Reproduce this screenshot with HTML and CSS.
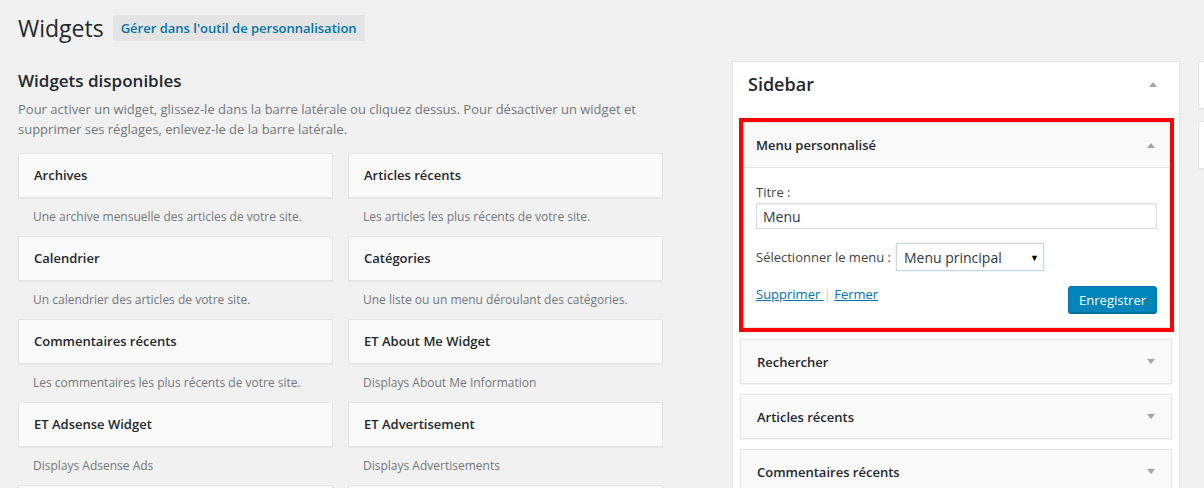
FILE: index.html
```html
<!DOCTYPE html>
<html lang="fr">
  <head>
    <meta charset="UTF-8" />
    <meta name="viewport" content="width=device-width, initial-scale=1.0" />
    <title>Widgets</title>
    <link rel="stylesheet" href="styles.css">
  </head>
  <body>
    <div class="wrap">
      <div class="page-title">
        <h1>Widgets</h1>
        <a class="title-action" href="#">Gérer dans l'outil de personnalisation</a>
      </div>

      <div class="columns">
        <div class="available">
          <h2>Widgets disponibles</h2>
          <p class="intro">
            Pour activer un widget, glissez-le dans la barre latérale ou cliquez dessus. Pour désactiver un widget et
            supprimer ses réglages, enlevez-le de la barre latérale.
          </p>

          <div class="widget-list">
            <div class="widget-item">
              <div class="widget-title">Archives</div>
              <div class="widget-description">Une archive mensuelle des articles de votre site.</div>
            </div>
            <div class="widget-item">
              <div class="widget-title">Articles récents</div>
              <div class="widget-description">Les articles les plus récents de votre site.</div>
            </div>
            <div class="widget-item">
              <div class="widget-title">Calendrier</div>
              <div class="widget-description">Un calendrier des articles de votre site.</div>
            </div>
            <div class="widget-item">
              <div class="widget-title">Catégories</div>
              <div class="widget-description">Une liste ou un menu déroulant des catégories.</div>
            </div>
            <div class="widget-item">
              <div class="widget-title">Commentaires récents</div>
              <div class="widget-description">Les commentaires les plus récents de votre site.</div>
            </div>
            <div class="widget-item">
              <div class="widget-title">ET About Me Widget</div>
              <div class="widget-description">Displays About Me Information</div>
            </div>
            <div class="widget-item">
              <div class="widget-title">ET Adsense Widget</div>
              <div class="widget-description">Displays Adsense Ads</div>
            </div>
            <div class="widget-item">
              <div class="widget-title">ET Advertisement</div>
              <div class="widget-description">Displays Advertisements</div>
            </div>
            <!-- next row, only its top edge shows -->
            <div class="widget-item">
              <div class="widget-title"></div>
            </div>
            <div class="widget-item">
              <div class="widget-title"></div>
            </div>
          </div>
        </div>

        <div class="sidebars">
          <div class="sidebar-panel">
            <div class="sidebar-name">
              <h2>Sidebar</h2>
              <span class="arrow up"></span>
            </div>
            <div class="sidebar-widgets">
              <div class="highlight">
                <div class="widget open">
                  <div class="widget-top">
                    <span>Menu personnalisé</span>
                    <span class="arrow up"></span>
                  </div>
                  <div class="widget-inside">
                    <label class="field-label" for="title">Titre :</label>
                    <input class="text-input" id="title" type="text" value="Menu" />
                    <div class="select-row">
                      <label for="menu">Sélectionner le menu :</label>
                      <div class="select-box" id="menu">
                        <span>Menu principal</span>
                        <span class="select-caret">▼</span>
                      </div>
                    </div>
                    <div class="widget-control">
                      <div class="links">
                        <a href="#">Supprimer </a> <span class="sep">|</span> <a href="#">Fermer</a>
                      </div>
                      <button class="button-primary">Enregistrer</button>
                    </div>
                  </div>
                </div>
              </div>

              <div class="widget">
                <div class="widget-top">
                  <span>Rechercher</span>
                  <span class="arrow down"></span>
                </div>
              </div>
              <div class="widget">
                <div class="widget-top">
                  <span>Articles récents</span>
                  <span class="arrow down"></span>
                </div>
              </div>
              <div class="widget">
                <div class="widget-top">
                  <span>Commentaires récents</span>
                  <span class="arrow down"></span>
                </div>
              </div>
            </div>
          </div>
        </div>

        <div class="sidebars more">
          <div class="sidebar-panel closed"></div>
          <div class="sidebar-panel closed"></div>
        </div>
      </div>
    </div>
  </body>
</html>
```

FILE: styles.css
```css
html,
body {
  margin: 0;
  height: 100%;
  overflow: hidden;
}
body {
  font-family: "Open Sans", "Noto Sans", sans-serif;
  font-size: 13px;
  color: #444;
  background-color: #f1f1f1;
}
.wrap {
  padding: 15px 0 0 18px;
}
.page-title {
  display: flex;
  align-items: center;
  height: 26px;
}
.page-title h1 {
  margin: 0 9px 0 0;
  font-size: 23px;
  font-weight: 400;
  line-height: 26px;
  color: #23282d;
}
.title-action {
  display: inline-block;
  padding: 0 8px;
  line-height: 26px;
  background: #e4e4e4;
  color: #0073aa;
  font-weight: 600;
  font-size: 13px;
  text-decoration: none;
}
.columns {
  display: flex;
  align-items: flex-start;
  margin-top: 20px;
}
.available {
  width: 645px;
  flex-shrink: 0;
  margin-right: 69px;
}
.available h2 {
  margin: 7px 0 0;
  font-size: 17px;
  font-weight: 600;
  line-height: 25px;
  color: #23282d;
}
.intro {
  margin: 6px 0 14px;
  line-height: 20px;
  color: #72777c;
}
.widget-list {
  display: grid;
  grid-template-columns: 315px 315px;
  column-gap: 15px;
}
.widget-title {
  height: 43px;
  line-height: 43px;
  padding: 0 15px;
  background: #fafafa;
  border: 1px solid #e5e5e5;
  box-shadow: 0 1px 1px rgba(0, 0, 0, 0.04);
  font-weight: 600;
  color: #23282d;
}
.widget-description {
  height: 38px;
  line-height: 38px;
  padding: 0 15px;
  font-size: 12px;
  color: #72777c;
}
.sidebars {
  width: 448px;
  flex-shrink: 0;
  margin-right: 18px;
}
.sidebars.more {
  flex: 1 1 auto;
  min-width: 0;
  margin-right: 0;
}
.sidebar-panel {
  background: #fff;
  border: 1px solid #e5e5e5;
  box-shadow: 0 1px 1px rgba(0, 0, 0, 0.04);
}
.sidebar-panel.closed {
  height: 46px;
  margin-bottom: 12px;
  border-right: 0;
}
.sidebar-name {
  display: flex;
  justify-content: space-between;
  align-items: center;
  height: 44px;
  padding: 0 22px 0 15px;
}
.sidebar-name h2 {
  margin: 0;
  font-size: 18px;
  font-weight: 600;
  color: #23282d;
}
.sidebar-widgets {
  padding: 12px 7px 0 7px;
}
.arrow {
  width: 0;
  height: 0;
  border-left: 4px solid transparent;
  border-right: 4px solid transparent;
}
.arrow.up {
  border-bottom: 5px solid #a0a5aa;
}
.arrow.down {
  border-top: 5px solid #a0a5aa;
}
.highlight {
  border: 4px solid #f00;
  margin: 0 -2px 7px -1px;
}
.widget {
  border: 1px solid #e5e5e5;
  background: #fafafa;
  margin-bottom: 10px;
  box-shadow: 0 1px 1px rgba(0, 0, 0, 0.04);
}
.widget.open {
  margin: 0;
  background: #fff;
  box-shadow: none;
}
.widget-top {
  display: flex;
  justify-content: space-between;
  align-items: center;
  height: 43px;
  padding: 0 16px 0 16px;
  font-weight: 600;
  color: #23282d;
}
.widget.open .widget-top {
  height: 44px;
  padding: 0 14px 0 12px;
  background: #fafafa;
  border-bottom: 1px solid #e5e5e5;
}
.widget-inside {
  padding: 15px 12px 14px;
}
.field-label {
  display: block;
  line-height: 18px;
}
.text-input {
  display: block;
  box-sizing: border-box;
  width: 100%;
  height: 26px;
  margin-top: 2px;
  padding: 0 6px;
  border: 1px solid #ddd;
  box-shadow: inset 0 1px 2px rgba(0, 0, 0, 0.07);
  font-family: inherit;
  font-size: 14px;
  color: #32373c;
}
.select-row {
  display: flex;
  align-items: center;
  margin-top: 14px;
}
.select-row label {
  margin-right: 5px;
}
.select-box {
  display: flex;
  justify-content: space-between;
  align-items: center;
  box-sizing: border-box;
  width: 148px;
  height: 28px;
  padding: 0 6px 0 7px;
  border: 1px solid #c6d6e2;
  box-shadow: 0 0 2px rgba(30, 140, 190, 0.25);
  background: #fff;
  font-size: 14px;
  color: #32373c;
}
.select-caret {
  font-size: 9px;
  color: #000;
  margin-right: -2px;
}
.widget-control {
  display: flex;
  justify-content: space-between;
  align-items: flex-start;
  margin-top: 14px;
}
.links {
  line-height: 18px;
}
.links a {
  color: #0073aa;
}
.sep {
  color: #ccc;
}
.button-primary {
  margin-top: 1px;
  height: 27px;
  padding: 0 10px;
  border: 1px solid #0073aa;
  border-radius: 3px;
  background: #0085ba;
  box-shadow: 0 1px 0 #006799;
  color: #fff;
  font-family: inherit;
  font-size: 13px;
  cursor: pointer;
}
```
